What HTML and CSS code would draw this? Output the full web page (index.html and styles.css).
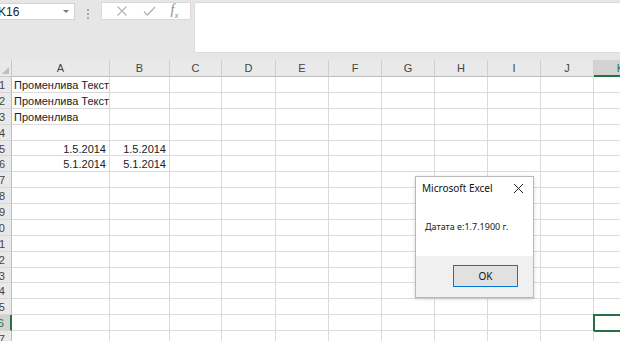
FILE: index.html
```html
<!DOCTYPE html>
<html>
<head>
<meta charset="utf-8">
<link rel="stylesheet" href="styles.css">
</head>
<body>
<div class="app">
  <div class="toolbar">
    <div class="namebox"><span class="nb-text">K16</span><span class="nb-arrow"></span></div>
    <div class="dots"><i></i><i></i><i></i></div>
    <div class="fxbox">
      <svg class="ic" width="12" height="12" viewBox="0 0 12 12"><path d="M1.5 1.5L10.5 10.5M10.5 1.5L1.5 10.5" stroke="#b4b4b4" stroke-width="1.2" fill="none"/></svg>
      <svg class="ic" width="13" height="12" viewBox="0 0 13 12"><path d="M1 6.5L4.5 10L12 2" stroke="#b4b4b4" stroke-width="1.3" fill="none"/></svg>
      <span class="fx">f<sub>x</sub></span>
    </div>
    <div class="formula"></div>
  </div>
  <div class="sheet" id="sheet"></div>
  <div class="dialog">
    <div class="dlg-title"><span>Microsoft Excel</span>
      <svg width="11" height="11" viewBox="0 0 11 11"><path d="M1 1L10 10M10 1L1 10" stroke="#222" stroke-width="1" fill="none"/></svg>
    </div>
    <div class="dlg-msg">Датата е:1.7.1900 г.</div>
    <div class="dlg-foot"><button class="ok">OK</button></div>
  </div>
</div>
<script>
const cols=['A','B','C','D','E','F','G','H','I','J','K'];
const data={1:{A:['Променлива Текст','l']},2:{A:['Променлива Текст','l']},3:{A:['Променлива','l']},5:{A:['1.5.2014','r'],B:['1.5.2014','r']},6:{A:['5.1.2014','r'],B:['5.1.2014','r']}};
const s=document.getElementById('sheet');
let h='<div class="corner"><span></span></div>';
cols.forEach(c=>{h+='<div class="ch'+(c==='K'?' sel':'')+'">'+c+'</div>';});
for(let r=1;r<=17;r++){
  h+='<div class="rh'+(r===16?' sel':'')+'"><span>'+r+'</span></div>';
  cols.forEach(c=>{
    const d=data[r]&&data[r][c];
    let cls='cell';
    if(d) cls+=' '+d[1];
    if(r===16&&c==='K') cls+=' active';
    h+='<div class="'+cls+'">'+(d?d[0]:'')+'</div>';
  });
}
s.innerHTML=h;
</script>
</body>
</html>
```
FILE: styles.css
```css
html,body{margin:0;padding:0;}
body{width:620px;height:341px;overflow:hidden;background:#fff;font-family:"Liberation Sans",Arial,sans-serif;}
.app{position:relative;width:620px;height:341px;overflow:hidden;}
.toolbar{height:60px;background:#e6e6e6;display:flex;align-items:flex-start;box-sizing:border-box;padding-top:2px;}
.namebox{margin-left:-8px;margin-top:1px;width:83px;height:17px;background:#fff;border:1px solid #d2d2d2;box-sizing:border-box;display:flex;align-items:center;justify-content:space-between;padding:0 5px 0 5px;}
.nb-text{font-size:12px;color:#222;}
.nb-arrow{width:0;height:0;border-left:3px solid transparent;border-right:3px solid transparent;border-top:3px solid #777;}
.dots{width:26px;display:flex;flex-direction:column;align-items:center;gap:2px;padding-top:7px;}
.dots i{width:2px;height:2px;background:#a8a8a8;display:block;}
.fxbox{width:90px;height:18px;background:#fff;border:1px solid #dadada;box-sizing:border-box;display:flex;align-items:center;justify-content:space-around;padding:0 4px 0 6px;}
.fx{font-family:"Liberation Serif",serif;font-style:italic;font-size:14px;color:#8a8a8a;line-height:1;}
.fx sub{font-size:9px;}
.formula{margin-left:3px;flex:1;height:51px;background:#fff;border:1px solid #dcdcdc;border-right:none;box-sizing:border-box;}
.sheet{display:grid;grid-template-columns:12px 98px 60px 52px 54px 53px 53px 53px 53px 53px 53px 54px;grid-template-rows:17px;grid-auto-rows:15.88px;font-size:11px;color:#222;}
.corner{background:#e9e9e9;border-right:1px solid #c8c8c8;border-bottom:1px solid #c8c8c8;position:relative;overflow:hidden;}
.corner span{position:absolute;right:2px;bottom:2px;width:0;height:0;border-left:7px solid transparent;border-bottom:7px solid #bdbdbd;}
.ch{background:#e9e9e9;border-right:1px solid #cfcfcf;border-bottom:1px solid #bdbdbd;text-align:center;line-height:17px;color:#444;font-size:11px;}
.ch.sel{background:#d3d3d3;border-bottom:2px solid #217346;color:#217346;line-height:16px;}
.rh{background:#e9e9e9;border-right:1px solid #bdbdbd;border-bottom:1px solid #d6d6d6;position:relative;overflow:hidden;color:#444;}
.rh span{position:absolute;right:6px;top:1px;line-height:15px;font-size:11px;}
.rh.sel{background:#d3d3d3;border-right:2px solid #217346;color:#217346;}
.cell{border-right:1px solid #dadada;border-bottom:1px solid #dadada;line-height:15px;padding:1px 3px 0 2px;white-space:nowrap;overflow:visible;box-sizing:border-box;}
.cell.r{text-align:right;}
.cell.l{position:relative;z-index:1;}
.cell.active{outline:2px solid #217346;outline-offset:-1px;}
.dialog{position:absolute;left:415px;top:176px;width:119px;height:122px;background:#fff;border:1px solid #b9b9b9;box-sizing:border-box;box-shadow:0 1px 4px rgba(0,0,0,.15);display:flex;flex-direction:column;font-family:"Noto Sans","Liberation Sans",sans-serif;}
.dlg-title{height:22px;display:flex;align-items:center;justify-content:space-between;padding:0 9px 0 6px;font-size:10px;color:#111;}
.dlg-msg{flex:1;font-size:9px;color:#222;padding:21px 0 0 9px;}
.dlg-foot{height:41px;background:#f0f0f0;display:flex;justify-content:flex-end;align-items:flex-start;padding:9px 15px 0 0;box-sizing:border-box;}
.ok{width:65px;height:22px;background:#e1e1e1;border:1.5px solid #0078d7;font-family:"Noto Sans",sans-serif;font-size:10px;color:#111;padding:0;}
```
